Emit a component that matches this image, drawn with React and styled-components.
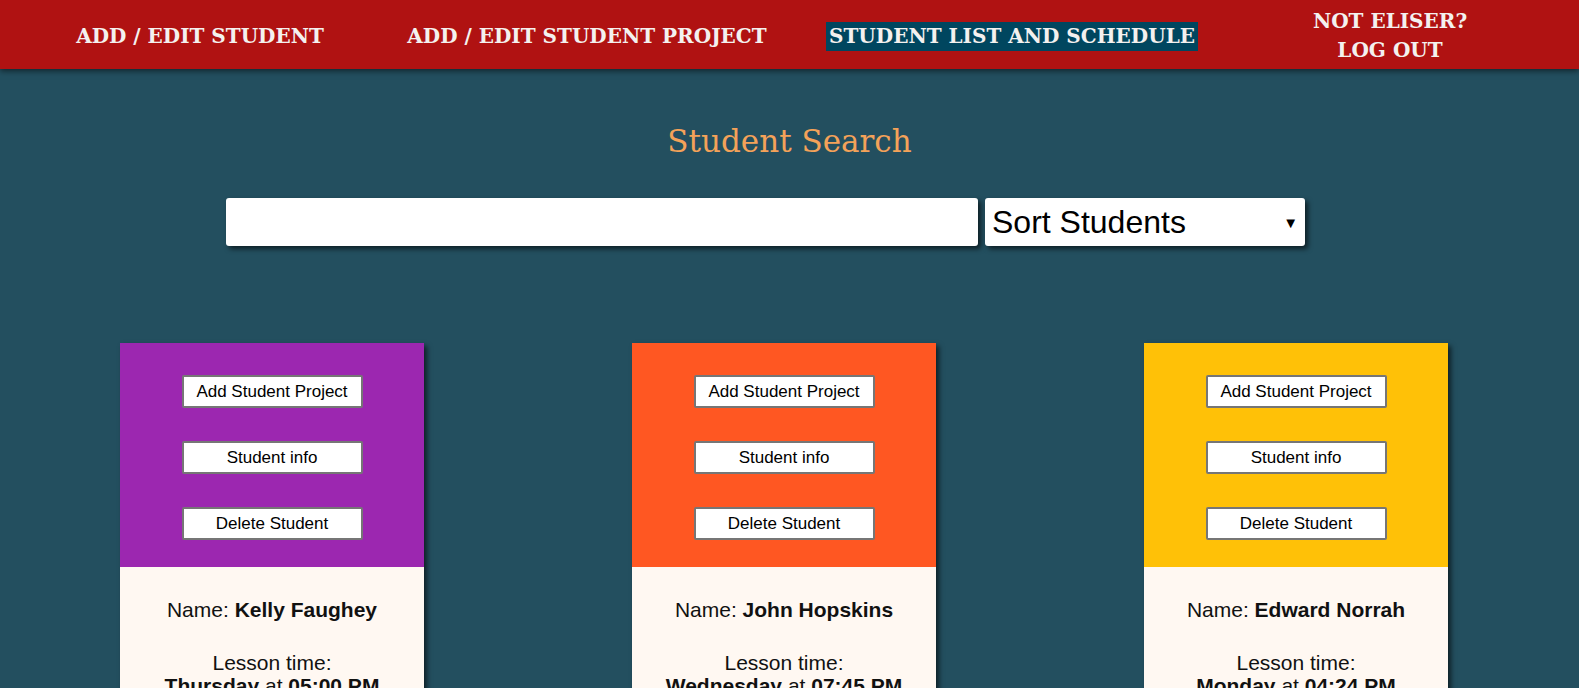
import React from 'react'
import styled, { createGlobalStyle } from 'styled-components'

const GlobalStyle = createGlobalStyle`
  html, body {
    margin: 0;
    padding: 0;
    background: #234f5f;
    font-family: 'Liberation Sans', Arial, sans-serif;
  }
`;

const Nav = styled.nav`
  height: 69px;
  box-sizing: border-box;
  padding-top: 3px;
  background: #b01212;
  box-shadow: 0 2px 6px rgba(0, 0, 0, 0.55);
  display: grid;
  grid-template-columns: 400px 374px 476px 280px;
  align-items: center;
  justify-items: center;
  position: relative;
`;

const NavItem = styled.a`
  font-family: 'DejaVu Serif', 'Liberation Serif', serif;
  font-size: 20px;
  font-weight: bold;
  color: #f4f1ef;
  text-transform: uppercase;
  text-align: center;
  line-height: 29px;
  padding: 0 3px;
  background: ${p => (p.active ? '#00465f' : 'transparent')};
  cursor: pointer;
`;

const Main = styled.main`
  display: flex;
  flex-direction: column;
  align-items: center;
`;

const Title = styled.h1`
  font-family: 'DejaVu Serif', 'Liberation Serif', serif;
  font-weight: normal;
  font-size: 31px;
  color: #f4a259;
  margin: 52px 0 37px;
  line-height: 40px;
`;

const SearchRow = styled.div`
  display: flex;
  gap: 7px;
  padding-right: 48px;
`;

const SearchInput = styled.input`
  width: 752px;
  height: 48px;
  box-sizing: border-box;
  border: none;
  border-radius: 3px;
  background: #fff;
  box-shadow: 3px 3px 5px rgba(0, 0, 0, 0.6);
  outline: none;
`;

const SortBox = styled.div`
  width: 320px;
  height: 48px;
  box-sizing: border-box;
  background: #fff;
  border-radius: 3px;
  box-shadow: 3px 3px 5px rgba(0, 0, 0, 0.6);
  display: flex;
  align-items: center;
  justify-content: space-between;
  padding: 0 7px 0 7px;
  font-size: 32px;
  color: #000;
`;

const Arrow = styled.span`
  font-size: 15px;
`;

const Cards = styled.div`
  display: flex;
  gap: 208px;
  margin-top: 97px;
  padding-right: 11px;
`;

const Card = styled.div`
  width: 304px;
  box-shadow: 3px 3px 5px rgba(0, 0, 0, 0.6);
  background: #fff8f2;
`;

const Top = styled.div`
  background: ${p => p.color};
  height: 224px;
  box-sizing: border-box;
  padding-top: 32px;
  display: flex;
  flex-direction: column;
  align-items: center;
  gap: 33px;
`;

const Button = styled.button`
  width: 181px;
  height: 33px;
  box-sizing: border-box;
  background: #fff;
  border: 2px solid #767676;
  border-radius: 2px;
  font-family: 'Liberation Sans', Arial, sans-serif;
  font-size: 17px;
  color: #000;
  padding: 0;
`;

const Info = styled.div`
  padding: 31px 6px 20px;
  text-align: center;
  font-size: 21px;
  line-height: 23px;
  color: #111;
`;

const Line = styled.p`
  margin: 0 0 30px;
`;

const students = [
  { color: '#9c27b0', name: 'Kelly Faughey', day: 'Thursday', time: '05:00 PM' },
  { color: '#ff5722', name: 'John Hopskins', day: 'Wednesday', time: '07:45 PM' },
  { color: '#ffc107', name: 'Edward Norrah', day: 'Monday', time: '04:24 PM' },
];

export default function App() {
  return (
    <>
      <GlobalStyle />
      <Nav>
        <NavItem>Add / Edit Student</NavItem>
        <NavItem>Add / Edit Student Project</NavItem>
        <NavItem active>Student List and Schedule</NavItem>
        <NavItem>Not Eliser?<br />Log Out</NavItem>
      </Nav>
      <Main>
        <Title>Student Search</Title>
        <SearchRow>
          <SearchInput type="text" />
          <SortBox>
            <span>Sort Students</span>
            <Arrow>▼</Arrow>
          </SortBox>
        </SearchRow>
        <Cards>
          {students.map(s => (
            <Card key={s.name}>
              <Top color={s.color}>
                <Button>Add Student Project</Button>
                <Button>Student info</Button>
                <Button>Delete Student</Button>
              </Top>
              <Info>
                <Line>Name: <b>{s.name}</b></Line>
                <Line>
                  Lesson time:<br />
                  <b>{s.day}</b> at <b>{s.time}</b>
                </Line>
              </Info>
            </Card>
          ))}
        </Cards>
      </Main>
    </>
  )
}
